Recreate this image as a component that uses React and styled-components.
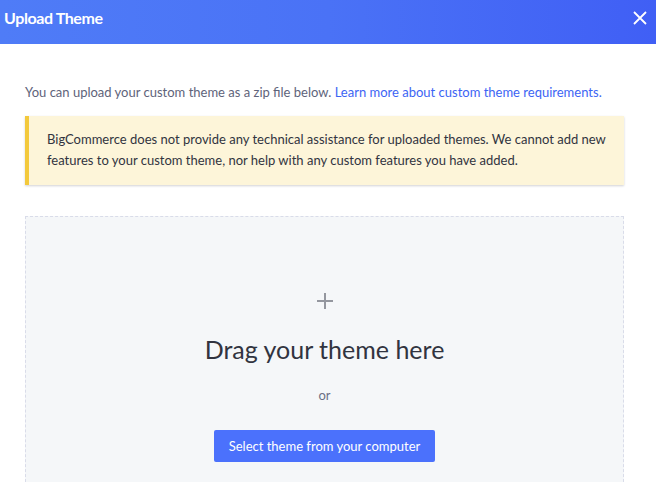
import React from 'react'
import styled, { createGlobalStyle } from 'styled-components'

const Global = createGlobalStyle`
    html, body {
        margin: 0;
        padding: 0;
        background: #ffffff;
        font-family: 'Lato', 'Liberation Sans', sans-serif;
        overflow: hidden;
    }
`

const Modal = styled.div`
    width: 656px;
    height: 482px;
    background: #ffffff;
    display: flex;
    flex-direction: column;
`

const Header = styled.div`
    height: 44px;
    box-sizing: border-box;
    flex-shrink: 0;
    display: flex;
    align-items: flex-start;
    justify-content: space-between;
    padding: 8px 6px 0 4px;
    background: linear-gradient(90deg, #4f7cf7 0%, #4a72f6 50%, #405ff5 100%);
`

const Title = styled.h1`
    margin: 0;
    font-size: 16px;
    line-height: 20px;
    font-weight: 700;
    color: #ffffff;
    letter-spacing: -0.4px;
`

const CloseButton = styled.button`
    border: none;
    background: none;
    padding: 0;
    width: 20px;
    height: 20px;
    display: flex;
    align-items: center;
    justify-content: center;
    cursor: pointer;
`

const Body = styled.div`
    flex: 1;
    display: flex;
    flex-direction: column;
    padding: 39px 32px 0 25px;
`

const Intro = styled.p`
    margin: 0;
    font-size: 13px;
    line-height: 18px;
    color: #5e637a;
`

const Link = styled.a`
    color: #3c64f4;
    text-decoration: none;
`

const Notice = styled.div`
    margin-top: 15px;
    background: #fdf5d9;
    border-left: 4px solid #f3c93c;
    box-shadow: 0 1px 2px rgba(49, 52, 64, 0.22);
    padding: 13px 18px 14px 18px;
    font-size: 13px;
    line-height: 21px;
    color: #313440;
`

const DropZone = styled.div`
    margin-top: 31px;
    flex: 1;
    background: #f5f7f9;
    border: 1px dashed #d9dce9;
    border-bottom: none;
    display: flex;
    flex-direction: column;
    align-items: center;
    padding-top: 76px;
`

const Plus = styled.div`
    width: 16px;
    height: 16px;
    display: flex;
`

const DragText = styled.div`
    margin-top: 25px;
    font-size: 25px;
    line-height: 31px;
    color: #313440;
`

const OrText = styled.div`
    margin-top: 22px;
    font-size: 13px;
    color: #6b7085;
`

const PrimaryButton = styled.button`
    margin-top: 27px;
    height: 32px;
    padding: 0 15px;
    border: none;
    border-radius: 2px;
    background: #4b71fc;
    color: #ffffff;
    font-family: inherit;
    font-size: 13px;
    cursor: pointer;
`

export default function App() {
    return <>
        <Global />
        <Modal>
            <Header>
                <Title>Upload Theme</Title>
                <CloseButton aria-label="Close">
                    <svg width="14" height="14" viewBox="0 0 14 14">
                        <path d="M1 1 L13 13 M13 1 L1 13" stroke="#ffffff" strokeWidth="1.8" />
                    </svg>
                </CloseButton>
            </Header>
            <Body>
                <Intro>
                    You can upload your custom theme as a zip file below. <Link href="#">Learn more about custom theme requirements.</Link>
                </Intro>
                <Notice>
                    BigCommerce does not provide any technical assistance for uploaded themes. We cannot add new features to your custom theme, nor help with any custom features you have added.
                </Notice>
                <DropZone>
                    <Plus>
                        <svg width="16" height="16" viewBox="0 0 16 16">
                            <path d="M8 0 V16 M0 8 H16" stroke="#94979f" strokeWidth="2" />
                        </svg>
                    </Plus>
                    <DragText>Drag your theme here</DragText>
                    <OrText>or</OrText>
                    <PrimaryButton>Select theme from your computer</PrimaryButton>
                </DropZone>
            </Body>
        </Modal>
    </>
}
